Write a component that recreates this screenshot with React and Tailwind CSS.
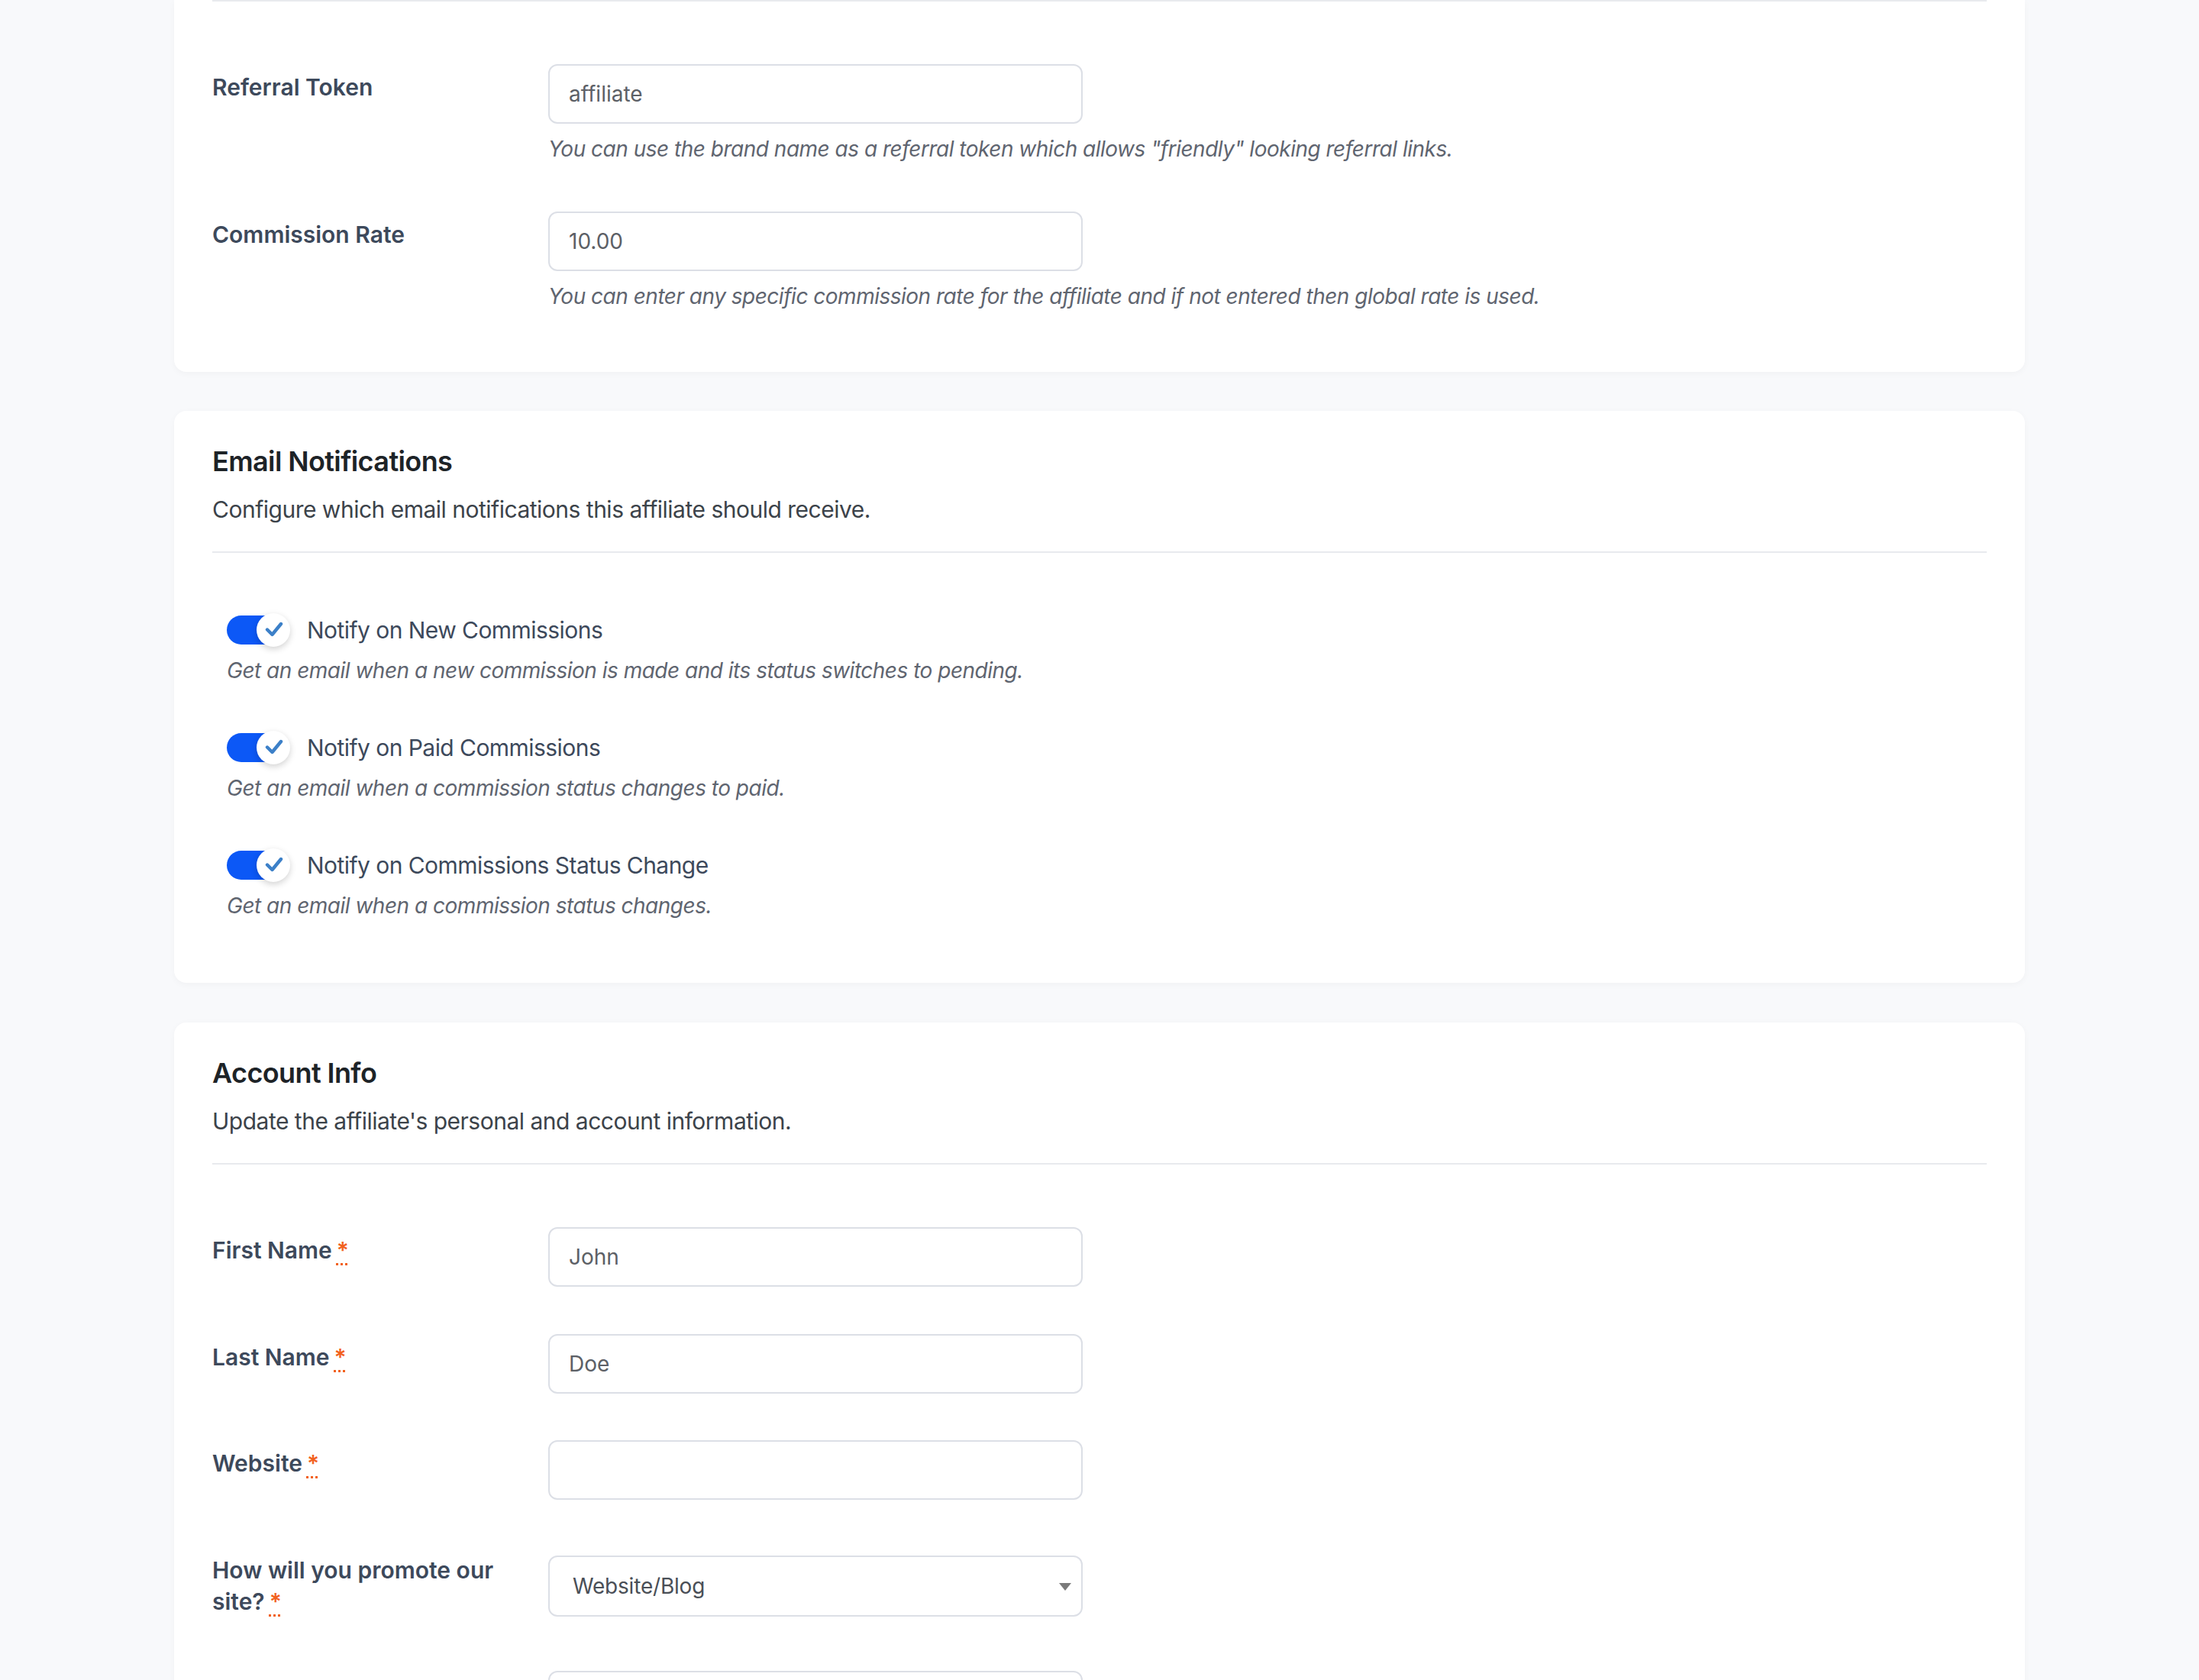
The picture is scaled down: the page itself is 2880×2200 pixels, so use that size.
import React from 'react';

// Affiliate edit screen — settings cards (rendered at 2x scale)

const FONT = "font-['Inter','Liberation_Sans',sans-serif]";

function Required() {
    return (
        <abbr
            title="required"
            className="ml-[6px] text-[#f2611d] underline decoration-dotted decoration-[3px] underline-offset-[6px]"
        >
            *
        </abbr>
    );
}

function TextInput({ value = '' }) {
    return (
        <input
            type="text"
            defaultValue={value}
            className="w-[700px] h-[78px] rounded-[12px] border-2 border-[#dcdfe6] bg-white px-[25px] text-[28px] text-[#5c6066] outline-none"
        />
    );
}

function FormRow({ label, required, helper, children, labelClass = 'mt-[8px] leading-[45px]', className = '' }) {
    return (
        <div className={`flex ${className}`}>
            <div className="w-[440px] shrink-0 pr-[40px]">
                {label && (
                    <label className={`block text-[30px] font-semibold text-[#3d495b] ${labelClass}`}>
                        {label}
                        {required && <Required />}
                    </label>
                )}
            </div>
            <div className="flex flex-col">
                {children}
                {helper && (
                    <p className="mt-[12px] text-[28px] leading-[42px] italic tracking-[-0.5px] text-[#5f6570]">{helper}</p>
                )}
            </div>
        </div>
    );
}

function Toggle() {
    return (
        <div className="relative w-[83px] h-[44px] shrink-0">
            <div className="absolute left-0 top-[3px] w-[76px] h-[38px] rounded-full bg-[#0c58f6]" />
            <div className="absolute right-0 top-0 w-[44px] h-[44px] rounded-full bg-white shadow-[0_3px_8px_rgba(0,0,0,0.18)] flex items-center justify-center">
                <svg width="24" height="22" viewBox="0 0 24 22" className="ml-[2px] -mt-[2px]">
                    <path d="M3 11.5 L9.5 18 L21 4" fill="none" stroke="#3c80c8" strokeWidth="4.4" strokeLinecap="round" strokeLinejoin="round" />
                </svg>
            </div>
        </div>
    );
}

function NotifyItem({ label, helper, className = '' }) {
    return (
        <div className={`pl-[19px] ${className}`}>
            <div className="flex items-center gap-[22px] h-[44px]">
                <Toggle />
                <span className="text-[30px] leading-[44px] tracking-[-0.55px] text-[#3d495b]">{label}</span>
            </div>
            <p className="mt-[10px] text-[28px] leading-[42px] italic tracking-[-0.5px] text-[#5f6570]">{helper}</p>
        </div>
    );
}

function CardHeader({ title, description }) {
    return (
        <div>
            <h2 className="text-[36px] leading-[48px] font-semibold tracking-[-0.6px] text-[#1d2327]">{title}</h2>
            <p className="mt-[17px] text-[30px] leading-[45px] tracking-[-0.5px] text-[#3c434a]">{description}</p>
            <div className="mt-[32px] h-[2px] bg-[#e8eaee]" />
        </div>
    );
}

const notifications = [
    { label: 'Notify on New Commissions', helper: 'Get an email when a new commission is made and its status switches to pending.' },
    { label: 'Notify on Paid Commissions', helper: 'Get an email when a commission status changes to paid.' },
    { label: 'Notify on Commissions Status Change', helper: 'Get an email when a commission status changes.' },
];

export default function App() {
    return (
        <div className={`h-[2200px] overflow-hidden bg-[#f8f9fb] ${FONT}`}>
            <div className="mx-auto w-[2424px] flex flex-col">

                {/* Affiliate settings (scrolled, top cut off) */}
                <div className="rounded-b-[16px] bg-white shadow-[0_2px_10px_rgba(0,0,0,0.035)] px-[50px] pb-[78px]">
                    <div className="h-[2px] bg-[#e8eaee]" />
                    <div className="pt-[82px]">
                        <FormRow
                            label="Referral Token"
                            helper={'You can use the brand name as a referral token which allows "friendly" looking referral links.'}
                        >
                            <TextInput value="affiliate" />
                        </FormRow>
                        <FormRow
                            className="mt-[61px]"
                            label="Commission Rate"
                            helper="You can enter any specific commission rate for the affiliate and if not entered then global rate is used."
                        >
                            <TextInput value="10.00" />
                        </FormRow>
                    </div>
                </div>

                {/* Email Notifications */}
                <div className="mt-[51px] rounded-[16px] bg-white shadow-[0_2px_10px_rgba(0,0,0,0.035)] px-[50px] pt-[42px] pb-[80px]">
                    <CardHeader
                        title="Email Notifications"
                        description="Configure which email notifications this affiliate should receive."
                    />
                    <div className="pt-[79px]">
                        {notifications.map((n, i) => (
                            <NotifyItem key={n.label} label={n.label} helper={n.helper} className={i > 0 ? 'mt-[58px]' : ''} />
                        ))}
                    </div>
                </div>

                {/* Account Info */}
                <div className="mt-[52px] rounded-[16px] bg-white shadow-[0_2px_10px_rgba(0,0,0,0.035)] px-[50px] pt-[42px] pb-[80px]">
                    <CardHeader
                        title="Account Info"
                        description="Update the affiliate's personal and account information."
                    />
                    <div className="pt-[82px]">
                        <FormRow label="First Name" required>
                            <TextInput value="John" />
                        </FormRow>
                        <FormRow className="mt-[62px]" label="Last Name" required>
                            <TextInput value="Doe" />
                        </FormRow>
                        <FormRow className="mt-[61px]" label="Website" required>
                            <TextInput />
                        </FormRow>
                        <FormRow
                            className="mt-[73px]"
                            label="How will you promote our site?"
                            required
                            labelClass="-mt-[1px] leading-[41px]"
                        >
                            <div className="relative w-[700px] h-[80px] rounded-[12px] border-2 border-[#dcdfe6] bg-white flex items-center pl-[30px]">
                                <span className="text-[28px] tracking-[-0.2px] text-[#4a4f57]">Website/Blog</span>
                                {/* select caret */}
                                <svg width="16" height="11" viewBox="0 0 16 11" className="absolute right-[13px] top-[34px]">
                                    <polygon points="0,0 16,0 8,10" fill="#7a7a7a" />
                                </svg>
                            </div>
                        </FormRow>
                        <FormRow className="mt-[70px]">
                            <TextInput />
                        </FormRow>
                    </div>
                </div>
            </div>
        </div>
    );
}
